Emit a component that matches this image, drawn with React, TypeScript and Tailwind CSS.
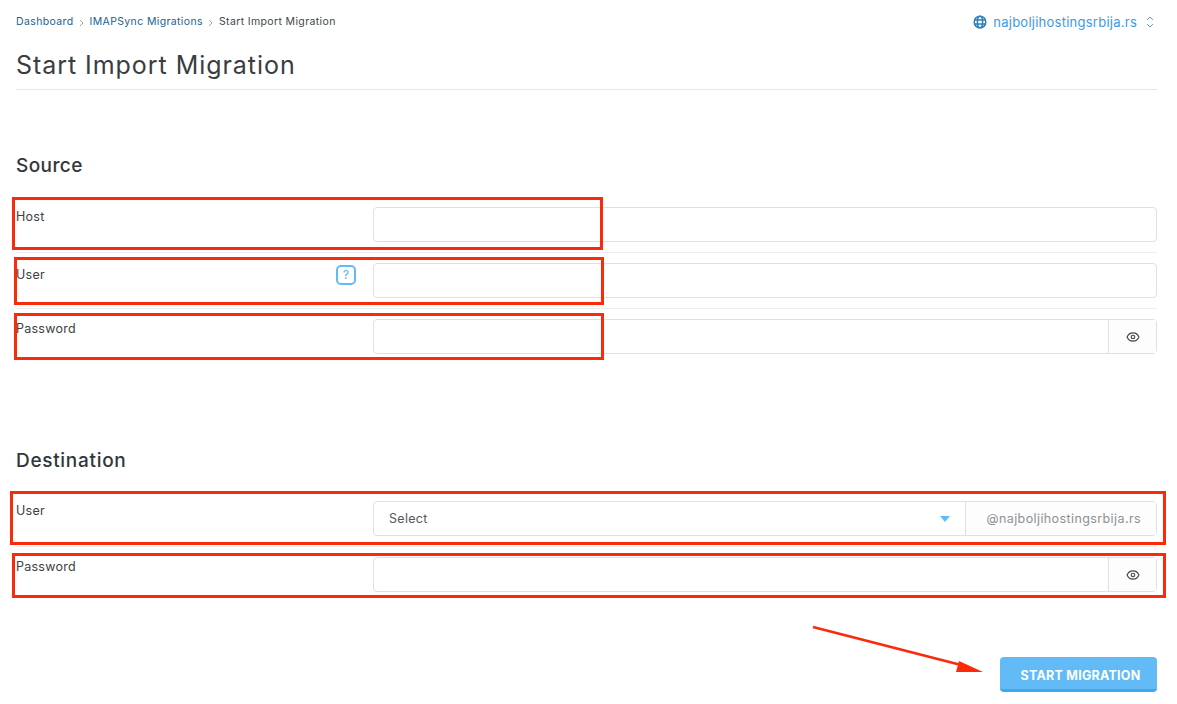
import React from 'react';
import { Eye } from 'lucide-react';

const font = { fontFamily: 'Inter, "Open Sans", sans-serif' };

function Chevron() {
  return (
    <svg width="6" height="8" viewBox="0 0 6 8" fill="none" className="mt-[2px]">
      <path d="M1 1l3 3-3 3" stroke="#9ca3af" strokeWidth="1" />
    </svg>
  );
}

function Row({ label, help, children, last }: { label: string; help?: boolean; children: React.ReactNode; last?: boolean }) {
  return (
    <div className={`grid grid-cols-[357px_1fr] h-[56px] pt-[10px] ${last ? '' : 'border-b border-[#eeeeee]'}`}>
      <div className="flex justify-between pr-[17px]">
        <span className={`text-[12.5px] leading-[18px] tracking-[0.25px] text-[#3d4044] ${help ? 'mt-[3px]' : 'mt-[1px]'}`}>{label}</span>
        {help && (
          <span className="w-[20px] h-[20px] mt-[2px] rounded-[5px] border-2 border-[#62bbf6] text-[#62bbf6] text-[12px] font-medium leading-[16px] text-center">?</span>
        )}
      </div>
      {children}
    </div>
  );
}

function TextBox() {
  return <div className="h-[35px] rounded-[4px] border border-[#e0e0e0] bg-white" />;
}

function PasswordBox() {
  return (
    <div className="h-[35px] rounded-[4px] border border-[#e0e0e0] bg-white flex">
      <div className="flex-1" />
      <div className="w-[48px] border-l border-[#e0e0e0] flex items-center justify-center bg-[#fdfdfd]">
        <Eye size={14} color="#44474b" strokeWidth={2} />
      </div>
    </div>
  );
}

// red markup drawn over the screenshot
function Mark({ className }: { className: string }) {
  return <div className={`absolute border-[3px] border-[#fb2a0b] pointer-events-none ${className}`} />;
}

export default function App() {
  return (
    <div className="relative w-[1177px] h-[704px] overflow-hidden bg-white" style={font}>
      <div className="ml-4 w-[1141px]">
        <div className="flex items-start justify-between h-[50px] pt-[15px]">
          <div className="flex items-center gap-[5px] text-[10.5px] leading-[14px] tracking-[0.37px]">
            <span className="text-[#1d5f8f]">Dashboard</span>
            <Chevron />
            <span className="text-[#1d5f8f]">IMAPSync Migrations</span>
            <Chevron />
            <span className="text-[#44474b]">Start Import Migration</span>
          </div>
          <div className="flex items-center mt-[-2px] pr-[3px]">
            <svg width="14" height="14" viewBox="0 0 14 14" fill="none" stroke="#2f7fb8" strokeWidth="1.5">
              <circle cx="7" cy="7" r="5.8" />
              <ellipse cx="7" cy="7" rx="2.6" ry="5.8" />
              <path d="M1.6 5h10.8M1.6 9h10.8" />
            </svg>
            <span className="ml-[6px] text-[13px] leading-[18px] tracking-[0.25px] text-[#3b9ae6]">najboljihostingsrbija.rs</span>
            <svg width="8" height="12" viewBox="0 0 8 12" fill="none" stroke="#5a9fd0" strokeWidth="1" className="ml-[9px]">
              <path d="M1 4l3-3 3 3M1 8l3 3 3-3" />
            </svg>
          </div>
        </div>
        <div className="h-[40px] border-b border-[#e6e6e6]">
          <h1 className="text-[25px] leading-[30px] font-normal text-[#3a3d42] tracking-[0.95px]">Start Import Migration</h1>
        </div>

        <h2 className="mt-[64px] h-[43px] text-[19px] leading-[24px] font-medium text-[#33363a] tracking-[0.4px]">Source</h2>
        <Row label="Host"><TextBox /></Row>
        <Row label="User" help><TextBox /></Row>
        <Row label="Password" last><PasswordBox /></Row>

        <h2 className="mt-[84px] h-[42px] text-[19px] leading-[24px] font-medium text-[#33363a] tracking-[0.7px]">Destination</h2>
        <Row label="User">
          <div className="h-[35px] rounded-[4px] border border-[#e0e0e0] flex text-[12.5px]">
            <div className="flex-1 flex items-center justify-between pl-[15px] pr-[15px] pt-[1px]">
              <span className="text-[#55585c] tracking-[0.3px]">Select</span>
              <span className="w-0 h-0 border-x-[5px] border-x-transparent border-t-[6px] border-t-[#62bbf6]" />
            </div>
            <div className="w-[191px] border-l border-[#e0e0e0] bg-[#fdfdfd] flex items-center justify-end pr-[15px] pt-[1px] text-[#8d9094] tracking-[0.4px]">
              @najboljihostingsrbija.rs
            </div>
          </div>
        </Row>
        <Row label="Password" last><PasswordBox /></Row>

        <div className="flex justify-end mt-[54px]">
          <button className="w-[157px] h-[35px] rounded-[4px] bg-[#62bbf6] border-b-[3px] border-[#3fa9f0] pt-[6px] pl-[4px] text-white text-[12.5px] font-bold tracking-[0.25px]">
            START MIGRATION
          </button>
        </div>
      </div>

      <Mark className="left-[12px] top-[197px] w-[591px] h-[53px]" />
      <Mark className="left-[14px] top-[257px] w-[590px] h-[48px]" />
      <Mark className="left-[14px] top-[313px] w-[590px] h-[47px]" />
      <Mark className="left-[10px] top-[491px] w-[1156px] h-[54px]" />
      <Mark className="left-[12px] top-[553px] w-[1154px] h-[45px]" />

      <svg className="absolute left-[805px] top-[620px]" width="190" height="60" viewBox="0 0 190 60" fill="none">
        <path d="M8 7L160 46" stroke="#fb2a0b" strokeWidth="2.6" />
        <path d="M178 52L151 52L154 41Z" fill="#fb2a0b" />
      </svg>
    </div>
  );
}
